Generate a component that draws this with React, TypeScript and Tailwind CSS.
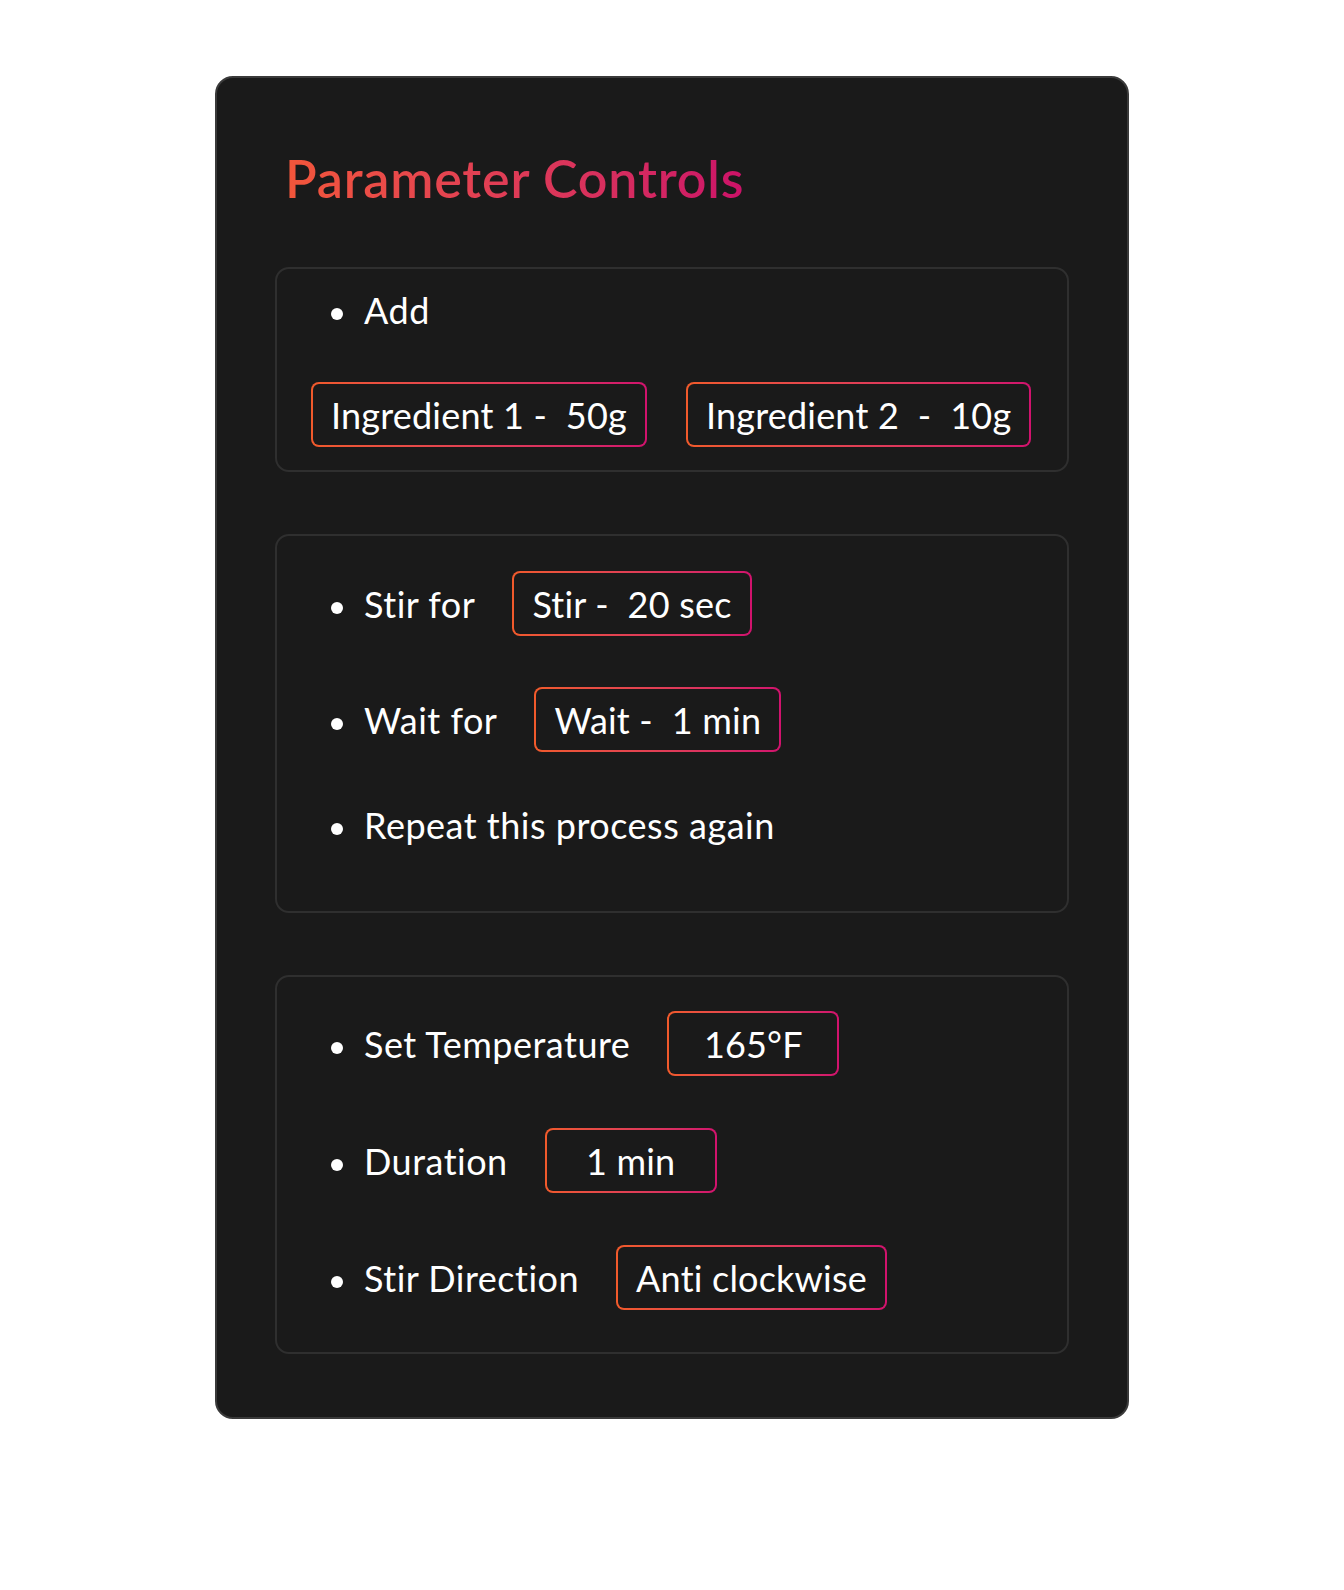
import React from "react";

const font = { fontFamily: "Lato, 'Noto Sans', sans-serif" };

function Bullet() {
  return <span className="block w-[12px] h-[12px] rounded-full bg-white shrink-0 translate-y-[4px]" />;
}

function ValueBox({ children, center }: { children: React.ReactNode; center?: boolean }) {
  return (
    <div className="h-[65px] rounded-[8px] p-[2px] bg-linear-to-r from-[#f15a2b] to-[#d1126d] shrink-0">
      <div
        className={
          "h-full rounded-[6px] bg-[#1a1a1a] flex items-center px-[18px] whitespace-pre text-[36px] leading-[44px] tracking-[0.2px] text-white " +
          (center ? "min-w-[168px] justify-center" : "")
        }
      >
        {children}
      </div>
    </div>
  );
}

function Row({ label, value, center }: { label: string; value?: string; center?: boolean }) {
  return (
    <div className={"flex items-center pl-[54px] " + (value ? "h-[65px]" : "h-[44px]")}>
      <Bullet />
      <span className="ml-[21px] text-[36px] leading-[44px] tracking-[0.5px] text-white whitespace-pre">{label}</span>
      {value && (
        <div className="ml-[37px]">
          <ValueBox center={center}>{value}</ValueBox>
        </div>
      )}
    </div>
  );
}

export default function App() {
  return (
    <div className="min-h-[1590px] bg-white pt-[76px]" style={font}>
      <div className="w-[914px] mx-auto rounded-[18px] border-2 border-[#3a3a3a] bg-[#1a1a1a] px-[58px] pt-[69px] pb-[63px]">
        <h1 className="pl-[10px] text-[52px] leading-[62px] font-semibold tracking-[0.8px]">
          <span className="bg-linear-to-r from-[#f2563a] to-[#cc1168] bg-clip-text text-transparent">
            Parameter Controls
          </span>
        </h1>

        <div className="mt-[58px] rounded-[14px] border-2 border-[#2f2f2f] pt-[19px] pb-[23px]">
          <Row label="Add" />
          <div className="mt-[50px] pl-[34px] flex gap-[39px]">
            <ValueBox>Ingredient 1 -  50g</ValueBox>
            <ValueBox>Ingredient 2  -  10g</ValueBox>
          </div>
        </div>

        <div className="mt-[62px] rounded-[14px] border-2 border-[#2f2f2f] pt-[35px] pb-[64px] flex flex-col gap-[51px]">
          <Row label="Stir for" value="Stir -  20 sec" />
          <Row label="Wait for" value="Wait -  1 min" />
          <Row label="Repeat this process again" />
        </div>

        <div className="mt-[62px] rounded-[14px] border-2 border-[#2f2f2f] pt-[34px] pb-[42px] flex flex-col gap-[52px]">
          <Row label="Set Temperature" value="165°F" center />
          <Row label="Duration" value="1 min" center />
          <Row label="Stir Direction" value="Anti clockwise" />
        </div>
      </div>
    </div>
  );
}
